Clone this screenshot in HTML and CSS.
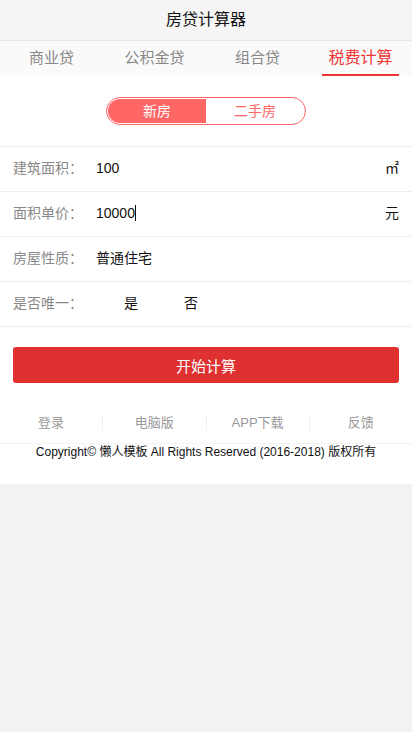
FILE: index.html
```
<!DOCTYPE html>
<html lang="zh-CN">
<head>
    <meta charset="UTF-8">
    <meta name="viewport" content="width=device-width, initial-scale=1.0">
    <title>房贷计算器</title>
    <link rel="stylesheet" href="styles.css">
</head>
<body>
    <div class="page">
        <div class="header">房贷计算器</div>
        <div class="tabs">
            <div class="tab"><span>商业贷</span></div>
            <div class="tab"><span>公积金贷</span></div>
            <div class="tab"><span>组合贷</span></div>
            <div class="tab active"><span>税费计算</span></div>
        </div>
        <div class="switch-box">
            <div class="switch">
                <div class="switch-item on">新房</div>
                <div class="switch-item">二手房</div>
            </div>
        </div>
        <div class="form">
            <div class="row">
                <div class="label">建筑面积：</div>
                <div class="value">100</div>
                <div class="unit">㎡</div>
            </div>
            <div class="row">
                <div class="label">面积单价：</div>
                <div class="value">10000<span class="caret"></span></div>
                <div class="unit">元</div>
            </div>
            <div class="row">
                <div class="label">房屋性质：</div>
                <div class="value">普通住宅</div>
            </div>
            <div class="row">
                <div class="label">是否唯一：</div>
                <div class="value options">
                    <span class="opt">是</span>
                    <span class="opt">否</span>
                </div>
            </div>
        </div>
        <div class="btn-box">
            <button class="btn">开始计算</button>
        </div>
        <div class="footer">
            <div class="links">
                <a>登录</a>
                <a>电脑版</a>
                <a>APP下载</a>
                <a>反馈</a>
            </div>
            <div class="copy">Copyright© 懒人模板 All Rights Reserved (2016-2018) 版权所有</div>
        </div>
    </div>
</body>
</html>
```
FILE: styles.css
```
body, html{
    margin: 0;
    padding: 0;
    background-color: #f2f2f2;
    font-family: "Liberation Sans", "Noto Sans CJK SC", sans-serif;
}
.page{
    background-color: #fff;
}
.header{
    height: 40px;
    line-height: 40px;
    text-align: center;
    font-size: 16px;
    color: #111;
    background-color: #f5f5f5;
    border-bottom: 1px solid #e8e8e8;
}
.tabs{
    display: flex;
    height: 35px;
    background-color: #fafafa;
}
.tab{
    flex: 1;
    display: flex;
    justify-content: center;
    font-size: 15px;
    color: #888;
}
.tab span{
    display: block;
    line-height: 33px;
    padding: 0 6px;
    border-bottom: 2px solid transparent;
}
.tab.active span{
    color: #e33;
    font-size: 16px;
    border-bottom-color: #e33;
}
.switch-box{
    display: flex;
    justify-content: center;
    padding: 21px 0;
    border-bottom: 1px solid #eee;
}
.switch{
    display: flex;
    width: 196px;
    height: 24px;
    padding: 1px;
    border: 1px solid #f66;
    border-radius: 14px;
    overflow: hidden;
}
.switch-item{
    flex: 1;
    text-align: center;
    line-height: 24px;
    font-size: 14px;
    color: #f66;
}
.switch-item.on{
    background-color: #f66;
    color: #fff;
    border-radius: 13px 0 0 13px;
}
.row{
    display: flex;
    align-items: center;
    height: 44px;
    padding: 0 13px;
    border-bottom: 1px solid #eee;
    font-size: 14px;
    line-height: 18px;
}
.label{
    width: 83px;
    color: #888;
    margin-top: -3px;
}
.value{
    flex: 1;
    color: #111;
    display: flex;
    align-items: center;
    margin-top: -3px;
}
.caret{
    display: inline-block;
    width: 1px;
    height: 16px;
    background-color: #111;
}
.unit{
    color: #111;
    margin-top: -3px;
}
.options{
    padding-left: 5px;
}
.opt{
    width: 60px;
    text-align: center;
}
.btn-box{
    padding: 20px 13px 0;
}
.btn{
    display: block;
    width: 100%;
    height: 36px;
    border: 0;
    border-radius: 3px;
    background-color: #e03131;
    color: #fff;
    font-size: 15px;
    font-family: "Liberation Sans", "Noto Sans CJK SC", sans-serif;
}
.footer{
    padding-top: 32px;
    padding-bottom: 24px;
}
.links{
    display: flex;
    padding-bottom: 12px;
    border-bottom: 1px solid #f3f3f3;
}
.links a{
    flex: 1;
    text-align: center;
    font-size: 13px;
    color: #999;
    line-height: 16px;
    border-left: 1px solid #eee;
}
.links a:first-child{
    border-left: 0;
}
.copy{
    text-align: center;
    font-size: 12px;
    color: #111;
    line-height: 16px;
}
```
